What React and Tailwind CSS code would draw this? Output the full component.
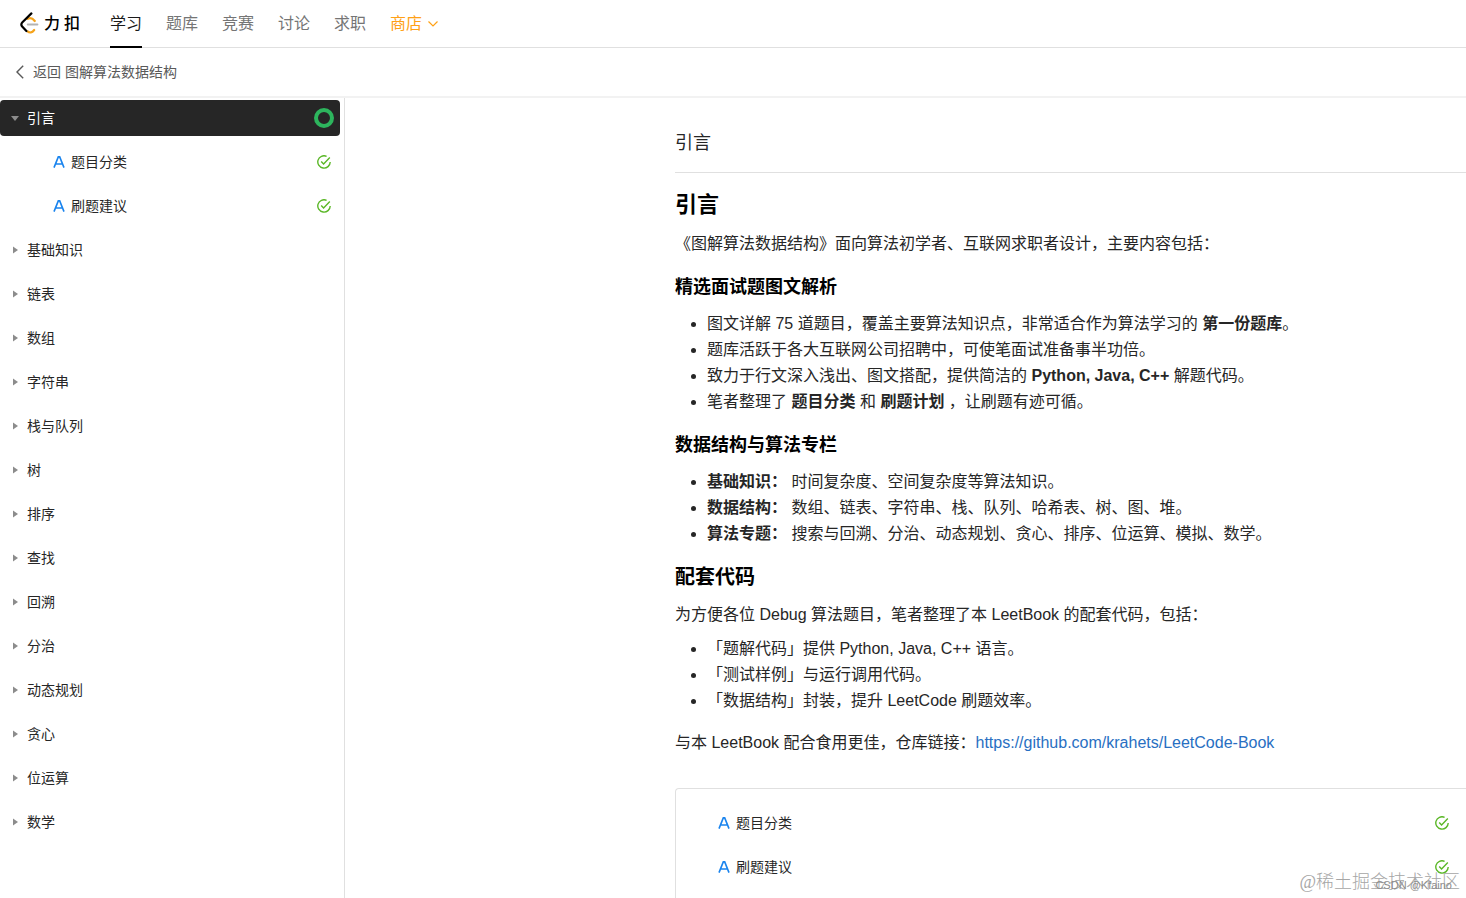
const navItems = ['学习', '题库', '竞赛', '讨论', '求职'];

const articles = ['题目分类', '刷题建议'];

const chapters = [
  '基础知识', '链表', '数组', '字符串', '栈与队列', '树', '排序',
  '查找', '回溯', '分治', '动态规划', '贪心', '位运算', '数学',
];

function Logo() {
  return (
    <svg width="22" height="24" viewBox="0 0 22 24" fill="none" strokeLinecap="round" aria-hidden="true">
      <path d="M9.6 19.4 C11.6 21.2 14 20.8 16.2 18" stroke="#f5a31b" strokeWidth="2.2" />
      <path d="M9.6 6.8 C12 5.4 14.4 6 16.8 9" stroke="#f5a31b" strokeWidth="2.2" />
      <path d="M9.8 12.6 H19.4" stroke="#b3b3b3" strokeWidth="2" />
      <path d="M13.4 1.4 L4.4 10.2 C3 11.6 3 13 4.2 14.6 L8.4 19" stroke="#000" strokeWidth="2.2" />
    </svg>
  );
}

function ArticleIcon() {
  return (
    <svg width="12" height="12" viewBox="0 0 12 12" fill="none" stroke="#1a84ee" strokeWidth="1.6" aria-hidden="true">
      <path d="M1 11.6 L5.3 0.9 H6.7 L11 11.6 M2.8 8 H9.2" />
    </svg>
  );
}

function DoneIcon() {
  return (
    <svg width="14" height="14" viewBox="0 0 14 14" fill="none" stroke="#5ab726" strokeWidth="1.4" aria-hidden="true">
      <path d="M9.6 1.3 A6.2 6.2 0 1 0 13.2 7" />
      <path d="M4.2 6.4 L6.6 8.9 L12.8 2.6" />
    </svg>
  );
}

function ProgressRing() {
  return (
    <svg width="20" height="20" viewBox="0 0 20 20" fill="none" aria-hidden="true">
      <circle cx="10" cy="10" r="8" stroke="#2db55d" strokeWidth="4" />
    </svg>
  );
}

function ArticleRow({ title }) {
  return (
    <a href="#" className="flex h-9 items-center text-sm text-[#262626]">
      <ArticleIcon />
      <span className="ml-1.5 flex-1">{title}</span>
      <DoneIcon />
    </a>
  );
}

function Header() {
  return (
    <header className="flex h-12 shrink-0 items-center border-b border-[#e0e0e0] pl-[18px]">
      <a href="#" className="flex w-[92px] items-center gap-1 text-base/[22px] font-medium text-black">
        <Logo />
        <span>力</span>
        <span>扣</span>
      </a>
      <nav className="flex h-full gap-6 text-base text-[#757575]">
        {navItems.map((item, i) => (
          <a
            key={item}
            href="#"
            className={`relative flex h-full items-center ${i === 0 ? 'text-[#1a1a1a]' : ''}`}
          >
            {item}
            {i === 0 && <span className="absolute inset-x-0 -bottom-px h-0.5 bg-black" />}
          </a>
        ))}
        <button type="button" className="flex items-center gap-1.5 text-[#ffa116]">
          商店
          <svg width="10" height="6" viewBox="0 0 10 6" fill="none" stroke="currentColor" strokeWidth="1.2" aria-hidden="true">
            <path d="M0.5 0.5 L5 5 L9.5 0.5" />
          </svg>
        </button>
      </nav>
    </header>
  );
}

function Sidebar() {
  return (
    <aside className="flex w-[345px] shrink-0 flex-col gap-2 border-r border-[#e0e0e0] pt-0.5 pr-1">
      <button type="button" className="flex h-9 shrink-0 items-center rounded bg-[#262626] pr-1.5 pl-[11px] text-sm text-white">
        <svg width="8" height="5" viewBox="0 0 8 5" fill="#8c8c8c" aria-hidden="true">
          <path d="M0 0 H8 L4 5 Z" />
        </svg>
        <span className="ml-2 flex-1 text-left">引言</span>
        <ProgressRing />
      </button>
      <div className="flex flex-col gap-2 pr-[9px] pl-[53px]">
        {articles.map((title) => <ArticleRow key={title} title={title} />)}
      </div>
      {chapters.map((name) => (
        <button key={name} type="button" className="flex h-9 shrink-0 items-center gap-2 pl-[13px] text-sm text-[#262626]">
          <svg width="6" height="8" viewBox="0 0 6 8" fill="#8c8c8c" aria-hidden="true">
            <path d="M0 0.5 L5 4 L0 7.5 Z" />
          </svg>
          {name}
        </button>
      ))}
    </aside>
  );
}

function BulletList({ children }) {
  return <ul className="list-disc pl-8">{children}</ul>;
}

function Article() {
  return (
    <main className="min-w-0 flex-1 pt-[31px] pl-[330px] text-base/[26px] text-[#262626]">
      <div className="border-b border-[#e0e0e0] pb-[15px] text-lg/[28px]">引言</div>

      <h1 className="mt-[17px] text-[22px]/[30px] font-bold text-black">引言</h1>
      <p className="mt-[11px]">《图解算法数据结构》面向算法初学者、互联网求职者设计，主要内容包括：</p>

      <h3 className="mt-4 mb-2.5 text-lg/[28px] font-bold text-black">精选面试题图文解析</h3>
      <BulletList>
        <li>图文详解 75 道题目，覆盖主要算法知识点，非常适合作为算法学习的 <b>第一份题库</b>。</li>
        <li>题库活跃于各大互联网公司招聘中，可使笔面试准备事半功倍。</li>
        <li>致力于行文深入浅出、图文搭配，提供简洁的 <b>Python, Java, C++</b> 解题代码。</li>
        <li>笔者整理了 <b>题目分类</b> 和 <b>刷题计划</b> ，让刷题有迹可循。</li>
      </BulletList>

      <h3 className="mt-4 mb-2.5 text-lg/[28px] font-bold text-black">数据结构与算法专栏</h3>
      <BulletList>
        <li><b>基础知识：</b> 时间复杂度、空间复杂度等算法知识。</li>
        <li><b>数据结构：</b> 数组、链表、字符串、栈、队列、哈希表、树、图、堆。</li>
        <li><b>算法专题：</b> 搜索与回溯、分治、动态规划、贪心、排序、位运算、模拟、数学。</li>
      </BulletList>

      <h2 className="mt-4 text-xl/[28px] font-bold text-black">配套代码</h2>
      <p className="mt-[11px] mb-2">为方便各位 Debug 算法题目，笔者整理了本 LeetBook 的配套代码，包括：</p>
      <BulletList>
        <li>「题解代码」提供 Python, Java, C++ 语言。</li>
        <li>「测试样例」与运行调用代码。</li>
        <li>「数据结构」封装，提升 LeetCode 刷题效率。</li>
      </BulletList>
      <p className="mt-4">
        与本 LeetBook 配合食用更佳，仓库链接：
        <a href="https://github.com/krahets/LeetCode-Book" className="text-[#286fc2]">
          https://github.com/krahets/LeetCode-Book
        </a>
      </p>

      <div className="mt-8 flex flex-col gap-2 rounded-tl border-t border-l border-[#e0e0e0] py-4 pr-[17px] pl-[42px]">
        {articles.map((title) => <ArticleRow key={title} title={title} />)}
      </div>
    </main>
  );
}

function Watermark() {
  return (
    <div className="pointer-events-none absolute right-1.5 bottom-[3px] text-lg/[26px] text-[#a6a6a6]">
      <span className="font-['Liberation_Serif','Noto_Sans_CJK_SC',serif] font-light">@稀土掘金技术社区</span>
      <span className="absolute right-2 bottom-0 text-[11px]/[20px] whitespace-nowrap text-[#8c8c8c]">CSDN @Kfaino</span>
    </div>
  );
}

export default function App() {
  return (
    <div
      lang="zh-CN"
      className="relative flex h-screen flex-col overflow-hidden bg-white font-['Liberation_Sans','Noto_Sans_CJK_SC',sans-serif]"
    >
      <Header />
      <a href="#" className="flex h-12 shrink-0 items-center pl-4 text-sm text-[#595959]">
        <svg width="8" height="14" viewBox="0 0 8 14" fill="none" stroke="currentColor" strokeWidth="1.4" aria-hidden="true">
          <path d="M7.2 0.8 L1 7 L7.2 13.2" />
        </svg>
        <span className="ml-[9px]">返回 图解算法数据结构</span>
      </a>
      <div className="flex min-h-0 flex-1 border-t-2 border-[#f2f2f2]">
        <Sidebar />
        <Article />
      </div>
      <Watermark />
    </div>
  );
}
